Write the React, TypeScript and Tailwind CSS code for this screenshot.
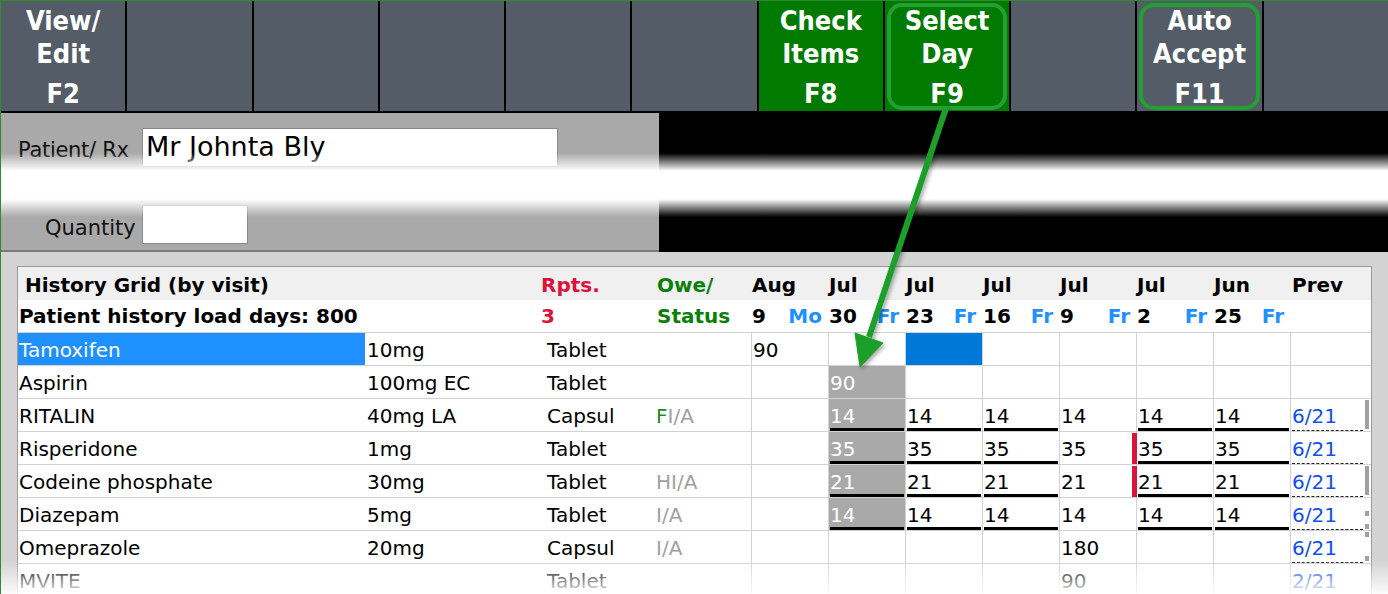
type Cell = { v?: string; gray?: boolean; blue?: boolean; u?: boolean; red?: boolean };

type Row = {
  name: string;
  strength: string;
  form: string;
  status?: React.ReactNode;
  days: Cell[];
  prev?: string;
  sel?: boolean;
  scroll?: 'tall' | 'dots' | 'dot';
};

const e: Cell = {};

const months = ['Aug', 'Jul', 'Jul', 'Jul', 'Jul', 'Jul', 'Jun'];
const dates = [
  ['9', 'Mo'],
  ['30', 'Fr'],
  ['23', 'Fr'],
  ['16', 'Fr'],
  ['9', 'Fr'],
  ['2', 'Fr'],
  ['25', 'Fr'],
];

const series = (n: string, red = false): Cell[] => [
  e,
  { v: n, gray: true, u: true },
  { v: n, u: true },
  { v: n, u: true },
  { v: n },
  { v: n, u: true, red },
  { v: n, u: true },
];

const rows: Row[] = [
  { name: 'Tamoxifen', strength: '10mg', form: 'Tablet', sel: true, days: [{ v: '90' }, e, { blue: true }, e, e, e, e] },
  { name: 'Aspirin', strength: '100mg EC', form: 'Tablet', days: [e, { v: '90', gray: true }, e, e, e, e, e] },
  {
    name: 'RITALIN',
    strength: '40mg LA',
    form: 'Capsul',
    status: (
      <>
        <span className="text-[#1f8a1f]">F</span>I/A
      </>
    ),
    days: series('14'),
    prev: '6/21',
    scroll: 'tall',
  },
  { name: 'Risperidone', strength: '1mg', form: 'Tablet', days: series('35', true), prev: '6/21' },
  { name: 'Codeine phosphate', strength: '30mg', form: 'Tablet', status: 'HI/A', days: series('21', true), prev: '6/21', scroll: 'tall' },
  { name: 'Diazepam', strength: '5mg', form: 'Tablet', status: 'I/A', days: series('14'), prev: '6/21', scroll: 'dots' },
  { name: 'Omeprazole', strength: '20mg', form: 'Capsul', status: 'I/A', days: [e, e, e, e, { v: '180' }, e, e], prev: '6/21', scroll: 'dot' },
  { name: 'MVITE', strength: '', form: 'Tablet', days: [e, e, e, e, { v: '90' }, e, e], prev: '2/21' },
];

// Toolbar key
const FKey = ({ lines, fkey, green, ring }: { lines?: string[]; fkey?: string; green?: boolean; ring?: boolean }) => (
  <div className={`relative h-full ${green ? 'bg-[#007a00]' : 'bg-[#535c67]'}`}>
    {ring && <div className="absolute inset-x-[2px] top-[2px] bottom-[1px] rounded-[15px] border-[4px] border-[#22a032]" />}
    {fkey && (
      <div className="relative flex h-full flex-col items-center pt-[3px] text-[27px] font-bold leading-[33px] text-white">
        {lines?.map((l) => (
          <span key={l}>{l}</span>
        ))}
        <span className="mt-[7px]">{fkey}</span>
      </div>
    )}
  </div>
);

const Toolbar = () => (
  <div className="grid h-[112px] grid-cols-11 gap-x-[2px] border-b-2 border-black bg-black font-['DejaVu_Sans_Condensed','DejaVu_Sans',sans-serif]">
    <FKey lines={['View/', 'Edit']} fkey="F2" />
    <FKey />
    <FKey />
    <FKey />
    <FKey />
    <FKey />
    <FKey lines={['Check', 'Items']} fkey="F8" green />
    <FKey lines={['Select', 'Day']} fkey="F9" green ring />
    <FKey />
    <FKey lines={['Auto', 'Accept']} fkey="F11" ring />
    <FKey />
  </div>
);

const PatientPanel = () => (
  <div className="flex h-[139px]">
    <div className="w-[658px] border-b-2 border-[#7a7a7a] bg-[#a9a9a9] pl-[17px] pt-[15px] text-[21px] text-[#111]">
      <div className="flex items-center">
        <span className="w-[124px] pt-[6px] tracking-[-0.3px]">Patient/ Rx</span>
        <div className="flex h-[39px] w-[416px] items-center border border-[#8a8a8a] bg-white px-[3px] text-[27px] text-black">
          Mr Johnta Bly
        </div>
      </div>
      <div className="mt-[37px] flex items-center">
        <span className="w-[124px] pl-[27px] pt-[9px]">Quantity</span>
        <div className="h-[39px] w-[106px] border border-[#8a8a8a] bg-white" />
      </div>
    </div>
    <div className="flex-1 bg-black" />
  </div>
);

const DayCell = ({ c }: { c: Cell }) => (
  <div
    className={`relative flex w-[77px] items-center border-l border-[#d2d2d2] pl-[1px] pt-[2px] ${
      c.gray ? 'bg-[#a9a9a9] text-white' : c.blue ? 'bg-[#0078d7]' : ''
    }`}
  >
    {c.v}
    {c.u && <div className="absolute bottom-0 left-[1px] right-[1px] h-[3px] bg-black" />}
    {c.red && <div className="absolute -left-[5px] top-[1px] bottom-0 w-[5px] bg-[#dc143c]" />}
  </div>
);

const GridRow = ({ r }: { r: Row }) => (
  <div className="flex h-[33px] border-b border-[#d2d2d2]">
    <div className={`flex w-[347px] items-center pl-[1px] pt-[2px] ${r.sel ? 'bg-[#1e90ff] text-white' : ''}`}>{r.name}</div>
    <div className="flex w-[176px] items-center pl-[2px] pt-[2px]">{r.strength}</div>
    <div className="flex w-[110px] items-center pl-[6px] pt-[2px]">{r.form}</div>
    <div className="flex w-[100px] items-center pl-[5px] pt-[2px] text-[#a0a0a0]">{r.status}</div>
    {r.days.map((c, i) => (
      <DayCell key={i} c={c} />
    ))}
    <div className="flex w-[73px] items-center border-l border-[#d2d2d2] pl-[1px] text-[#1050f0]">
      <div className={`flex h-full w-full items-center pt-[2px] ${r.prev ? 'border-b border-dashed border-[#222]' : ''}`}>{r.prev}</div>
    </div>
    <div className="relative w-[8px]">
      {r.scroll === 'tall' && <div className="absolute left-[2px] top-[1px] bottom-[2px] w-[4px] bg-[#a0a0a0]" />}
      {r.scroll === 'dots' && (
        <>
          <div className="absolute left-[2px] top-[13px] h-[5px] w-[4px] bg-[#a0a0a0]" />
          <div className="absolute left-[2px] bottom-[1px] h-[5px] w-[4px] bg-[#a0a0a0]" />
        </>
      )}
      {r.scroll === 'dot' && (
        <>
          <div className="absolute left-[2px] top-[1px] h-[5px] w-[4px] bg-[#a0a0a0]" />
          <div className="absolute left-[2px] bottom-[2px] h-[5px] w-[4px] bg-[#a0a0a0]" />
        </>
      )}
    </div>
  </div>
);

const HistoryGrid = () => (
  <div className="px-[16px] pt-[14px]">
    <div className="h-[400px] border border-[#9a9a9a] bg-white font-['DejaVu_Sans',sans-serif] text-[20px] text-black">
      <div className="flex h-[33px] items-center bg-[#f0f0f0] pt-[2px] font-bold">
        <div className="w-[523px] pl-[7px]">History Grid (by visit)</div>
        <div className="w-[116px] text-[#dc143c]">Rpts.</div>
        <div className="w-[94px] text-[#0a800a]">Owe/</div>
        {months.map((m, i) => (
          <div key={i} className="w-[77px] pl-[1px]">
            {m}
          </div>
        ))}
        <div className="pl-[2px]">Prev</div>
      </div>
      <div className="flex h-[33px] items-center border-b border-[#d2d2d2] font-bold">
        <div className="w-[523px] pl-[1px]">Patient history load days: 800</div>
        <div className="w-[116px] text-[#dc143c]">3</div>
        <div className="w-[94px] text-[#0a800a]">Status</div>
        {dates.map(([d, w], i) => (
          <div key={i} className="flex w-[77px] justify-between pl-[1px] pr-[6px]">
            <span>{d}</span>
            <span className="text-[#1e90ff]">{w}</span>
          </div>
        ))}
      </div>
      {rows.map((r) => (
        <GridRow key={r.name} r={r} />
      ))}
    </div>
  </div>
);

const Arrow = () => (
  <svg className="pointer-events-none absolute left-0 top-0" width="1388" height="594" viewBox="0 0 1388 594">
    <defs>
      <filter id="sh" x="-20%" y="-20%" width="140%" height="140%">
        <feDropShadow dx="2" dy="2" stdDeviation="2" floodColor="#000" floodOpacity="0.35" />
      </filter>
    </defs>
    <g filter="url(#sh)" fill="#1e9e2c" stroke="#1e9e2c">
      <line x1="945" y1="107" x2="868" y2="336" strokeWidth="6" />
      <polygon points="859,366 854,332 882,342" strokeWidth="1" strokeLinejoin="round" />
    </g>
  </svg>
);

export default function App() {
  return (
    <div className="relative h-[594px] w-[1388px] overflow-hidden border-l border-t border-[#2e8b2e] bg-[#d3d3d3] font-['DejaVu_Sans',sans-serif]">
      <Toolbar />
      <PatientPanel />
      <HistoryGrid />
      <div className="pointer-events-none absolute inset-x-0 top-[152px] h-[64px] bg-[linear-gradient(to_bottom,transparent,white_28%,white_72%,transparent)]" />
      <div className="pointer-events-none absolute inset-x-0 bottom-0 h-[34px] bg-[linear-gradient(to_bottom,transparent,rgba(255,255,255,0.92))]" />
      <Arrow />
    </div>
  );
}
